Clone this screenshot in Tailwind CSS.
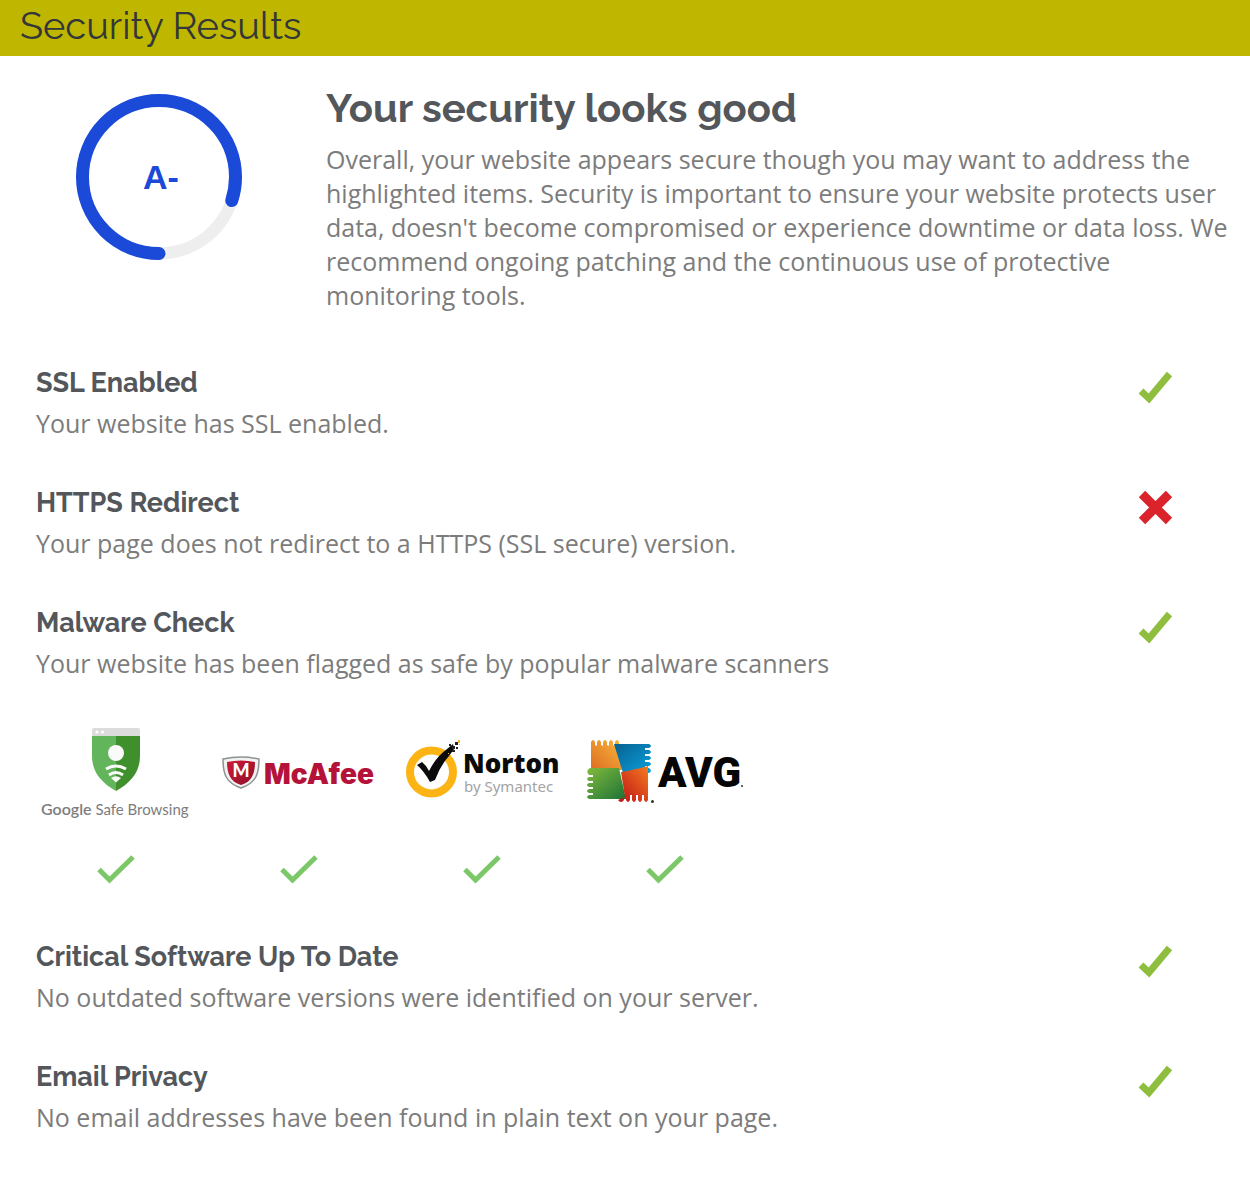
<!DOCTYPE html>
<html lang="en">
<head>
  <meta charset="UTF-8">
  <meta name="viewport" content="width=device-width, initial-scale=1.0">
  <title>Security Results</title>
  <script src="https://cdn.jsdelivr.net/npm/@tailwindcss/browser@4"></script>
</head>
<body class="bg-white font-['Open_Sans','Noto_Sans',sans-serif] text-[25px] leading-[34px] text-[#7c7c7c]">
  <!-- Shared icons -->
  <svg class="hidden" aria-hidden="true">
    <symbol id="tick" viewBox="0 0 36 36">
      <path d="M4 21 L12 28.500 L32.500 4" fill="none" stroke="#8fbe3e" stroke-width="7"/>
    </symbol>
    <symbol id="cross" viewBox="0 0 36 36">
      <path d="M5 4 L32 31 M32 4 L5 31" fill="none" stroke="#da232b" stroke-width="9"/>
    </symbol>
    <symbol id="thin-tick" viewBox="0 0 40 32">
      <path d="M3 15.500 L13.500 26 L37 3" fill="none" stroke="#7cc868" stroke-width="5"/>
    </symbol>
  </svg>

  <header class="bg-[#bfb600] h-14 px-5">
    <h1 class="font-[Raleway,Lato,sans-serif] text-[38px] leading-[52px] text-[#33373a]">Security Results</h1>
  </header>

  <main>
    <!-- Overall grade -->
    <section class="flex pt-8 pb-[50px] pr-4">
      <div class="w-[326px] shrink-0 pl-[74px] pt-1">
        <svg class="w-[170px] h-[170px]" viewBox="0 0 170 170" role="img" aria-label="Grade A-">
          <circle cx="85" cy="85" r="76.500" fill="none" stroke="#eee" stroke-width="12"/>
          <circle cx="85" cy="85" r="76.500" fill="none" stroke="#1b49d8" stroke-width="13" stroke-linecap="round" pathLength="100" stroke-dasharray="80 100" transform="rotate(90 85 85)"/>
          <text x="87" y="97" text-anchor="middle" font-family="Liberation Sans, Arial, sans-serif" font-size="34" font-weight="700" fill="#1b49d8">A-</text>
        </svg>
      </div>
      <div>
        <h2 class="font-[Raleway,Lato,sans-serif] text-[40px] leading-10 font-bold text-[#53575b]">Your security looks good</h2>
        <p class="mt-[14px]">Overall, your website appears secure though you may want to address the highlighted items. Security is important to ensure your website protects user data, doesn't become compromised or experience downtime or data loss. We recommend ongoing patching and the continuous use of protective monitoring tools.</p>
      </div>
    </section>

    <!-- Checks -->
    <section class="flex justify-between pl-9 pb-[42px]">
      <div>
        <h3 class="font-[Raleway,Lato,sans-serif] text-[27px] leading-[42px] font-bold text-[#53575b]">SSL Enabled</h3>
        <p class="mt-[2px]">Your website has SSL enabled.</p>
      </div>
      <div class="w-[190px] shrink-0 flex justify-center pt-2">
        <svg class="w-9 h-9" role="img" aria-label="Passed"><use href="#tick"/></svg>
      </div>
    </section>

    <section class="flex justify-between pl-9 pb-[42px]">
      <div>
        <h3 class="font-[Raleway,Lato,sans-serif] text-[27px] leading-[42px] font-bold text-[#53575b]">HTTPS Redirect</h3>
        <p class="mt-[2px]">Your page does not redirect to a HTTPS (SSL secure) version.</p>
      </div>
      <div class="w-[190px] shrink-0 flex justify-center pt-2">
        <svg class="w-9 h-9" role="img" aria-label="Failed"><use href="#cross"/></svg>
      </div>
    </section>

    <section class="flex justify-between pl-9 pb-[42px]">
      <div>
        <h3 class="font-[Raleway,Lato,sans-serif] text-[27px] leading-[42px] font-bold text-[#53575b]">Malware Check</h3>
        <p class="mt-[2px]">Your website has been flagged as safe by popular malware scanners</p>
      </div>
      <div class="w-[190px] shrink-0 flex justify-center pt-2">
        <svg class="w-9 h-9" role="img" aria-label="Passed"><use href="#tick"/></svg>
      </div>
    </section>

    <!-- Malware scanners -->
    <ul class="flex pl-6 pb-[50px]">
      <li class="w-[183px] flex flex-col items-center gap-8">
        <svg class="w-[160px] h-[100px]" viewBox="0 0 160 100" role="img" aria-label="Google Safe Browsing">
          <path d="M56 14 H80 V69 C64 60 56 49 56 34 Z" fill="#63b55c"/>
          <path d="M80 14 H104 V34 C104 49 96 60 80 69 Z" fill="#3f902c"/>
          <path d="M56 14 V8 Q56 6 58 6 H102 Q104 6 104 8 V14 Z" fill="#dcdcdc"/>
          <circle cx="61" cy="10" r="1.500" fill="#fff"/>
          <circle cx="66.500" cy="10" r="1.500" fill="#fff"/>
          <circle cx="80" cy="31" r="8" fill="#fafafa"/>
          <path d="M70 47 Q80 41 90 47 M73 53 Q80 48 87 53" fill="none" stroke="#fafafa" stroke-width="3"/>
          <path d="M75 56 Q80 52.500 85 56 L80 60.500 Z" fill="#fafafa"/>
          <text x="5" y="93" font-family="Lato, sans-serif" font-size="16" fill="#7d7d7d"><tspan font-weight="600">Google</tspan><tspan font-size="15"> Safe Browsing</tspan></text>
        </svg>
        <svg class="w-10 h-8" role="img" aria-label="Safe"><use href="#thin-tick"/></svg>
      </li>
      <li class="w-[183px] flex flex-col items-center gap-8">
        <svg class="w-[160px] h-[100px]" viewBox="0 0 160 100" role="img" aria-label="McAfee">
          <defs>
            <linearGradient id="mcafee-red" x1="0" y1="0" x2="1" y2="1">
              <stop offset="0" stop-color="#d01a3a"/>
              <stop offset="1" stop-color="#8c1028"/>
            </linearGradient>
          </defs>
          <path d="M4 37 Q22 33 40 37 C40 52 37 61 22 66 C7 61 4 52 4 37 Z" fill="#f1f1f1" stroke="#8d9295" stroke-width="1.500"/>
          <path d="M8 40 Q22 37 36 40 C36 51 33 60 22 63 C11 60 8 51 8 40 Z" fill="url(#mcafee-red)"/>
          <text x="22" y="55" text-anchor="middle" font-family="Lato, sans-serif" font-size="18" font-weight="900" fill="#fff">M</text>
          <text x="45" y="62" font-family="Inter, sans-serif" font-size="28" font-weight="900" fill="#b5123a">McAfee</text>
        </svg>
        <svg class="w-10 h-8" role="img" aria-label="Safe"><use href="#thin-tick"/></svg>
      </li>
      <li class="w-[183px] flex flex-col items-center gap-8">
        <svg class="w-[160px] h-[100px]" viewBox="0 0 160 100" role="img" aria-label="Norton by Symantec">
          <circle cx="29.500" cy="50" r="21.500" fill="#fff" stroke="#fbb414" stroke-width="8"/>
          <path d="M15 43 L20 40 Q24 43 27 49 Q34 35 45 27 L51 22 L52 27 L47 34 Q38 44 33 58 L28 60 Q22 49 15 43 Z" fill="#0b0b0b"/>
          <path d="M50 24 h3 v3 h-3 z M53 20 h3 v3 h-3 z M54 25 h2 v2 h-2 z M47 22 h2 v2 h-2 z M50 28 h3 v2 h-3 z" fill="#222"/>
          <path d="M56 18 h2 v3 h-2 z M46 31 h1 v1 h-1 z M57 22 h1 v1 h-1 z" fill="#fbb414"/>
          <text x="61" y="51" font-family="Open Sans, sans-serif" font-size="26" font-weight="800" fill="#0b0b0b">Norton</text>
          <text x="62" y="70" font-family="Noto Sans, sans-serif" font-size="15" fill="#a3a3a3">by Symantec</text>
        </svg>
        <svg class="w-10 h-8" role="img" aria-label="Safe"><use href="#thin-tick"/></svg>
      </li>
      <li class="w-[183px] flex flex-col items-center gap-8">
        <svg class="w-[160px] h-[100px]" viewBox="0 0 160 100" role="img" aria-label="AVG">
          <defs>
            <linearGradient id="avg-orange" x1="0" y1="1" x2="1" y2="0">
              <stop offset="0" stop-color="#de6c23"/>
              <stop offset="1" stop-color="#f7b63b"/>
            </linearGradient>
            <linearGradient id="avg-blue" x1="0" y1="0" x2="1" y2="1">
              <stop offset="0" stop-color="#08608f"/>
              <stop offset="1" stop-color="#0ba0dc"/>
            </linearGradient>
            <linearGradient id="avg-green" x1="0" y1="0" x2="1" y2="1">
              <stop offset="0" stop-color="#82bb3c"/>
              <stop offset="1" stop-color="#1b7137"/>
            </linearGradient>
            <linearGradient id="avg-red" x1="1" y1="0" x2="0" y2="1">
              <stop offset="0" stop-color="#f47b20"/>
              <stop offset="1" stop-color="#bd0f16"/>
            </linearGradient>
          </defs>
          <path d="M6 48 V20 Q8 16 10 20 V23 L12 24 V20 Q14 16 16 20 V23 L18 24 V20 Q20 16 22 20 V23 L24 24 V20 Q26 16 28 20 V23 L30 24 V20 Q32 16 34 20 V26 L37 48 Z" fill="url(#avg-orange)"/>
          <path d="M29 22 H64 Q68 24 64 26 H60 V28 H64 Q68 30 64 32 H60 V34 H64 Q68 36 64 38 H60 V40 H64 Q68 42 64 44 H60 V46 H64 Q68 49 64 51 H38 Z" fill="url(#avg-blue)"/>
          <path d="M5 46 H34 L41 77 H4 Q0 75 4 73 H8 V71 H4 Q0 69 4 67 H8 V65 H4 Q0 63 4 61 H8 V59 H4 Q0 57 4 55 H8 V53 H4 Q0 49 5 46 Z" fill="url(#avg-green)"/>
          <path d="M36 50 Q48 48 63 44 V78 Q61 82 59 78 V73 H57 V78 Q55 82 53 78 V73 H51 V78 Q49 82 47 78 V73 H45 V78 Q43 82 41 78 V76 H39 V78 Q36 82 33 78 L40 75 Z" fill="url(#avg-red)"/>
          <circle cx="67.500" cy="79.500" r="1.500" fill="#333"/>
          <text x="73" y="65" font-family="Roboto, sans-serif" font-size="42" font-weight="900" fill="#050505">AVG</text>
          <circle cx="157" cy="64" r="1" fill="#333"/>
        </svg>
        <svg class="w-10 h-8" role="img" aria-label="Safe"><use href="#thin-tick"/></svg>
      </li>
    </ul>

    <section class="flex justify-between pl-9 pb-[42px]">
      <div>
        <h3 class="font-[Raleway,Lato,sans-serif] text-[27px] leading-[42px] font-bold text-[#53575b]">Critical Software Up To Date</h3>
        <p class="mt-[2px]">No outdated software versions were identified on your server.</p>
      </div>
      <div class="w-[190px] shrink-0 flex justify-center pt-2">
        <svg class="w-9 h-9" role="img" aria-label="Passed"><use href="#tick"/></svg>
      </div>
    </section>

    <section class="flex justify-between pl-9 pb-[42px]">
      <div>
        <h3 class="font-[Raleway,Lato,sans-serif] text-[27px] leading-[42px] font-bold text-[#53575b]">Email Privacy</h3>
        <p class="mt-[2px]">No email addresses have been found in plain text on your page.</p>
      </div>
      <div class="w-[190px] shrink-0 flex justify-center pt-2">
        <svg class="w-9 h-9" role="img" aria-label="Passed"><use href="#tick"/></svg>
      </div>
    </section>
  </main>
</body>
</html>
